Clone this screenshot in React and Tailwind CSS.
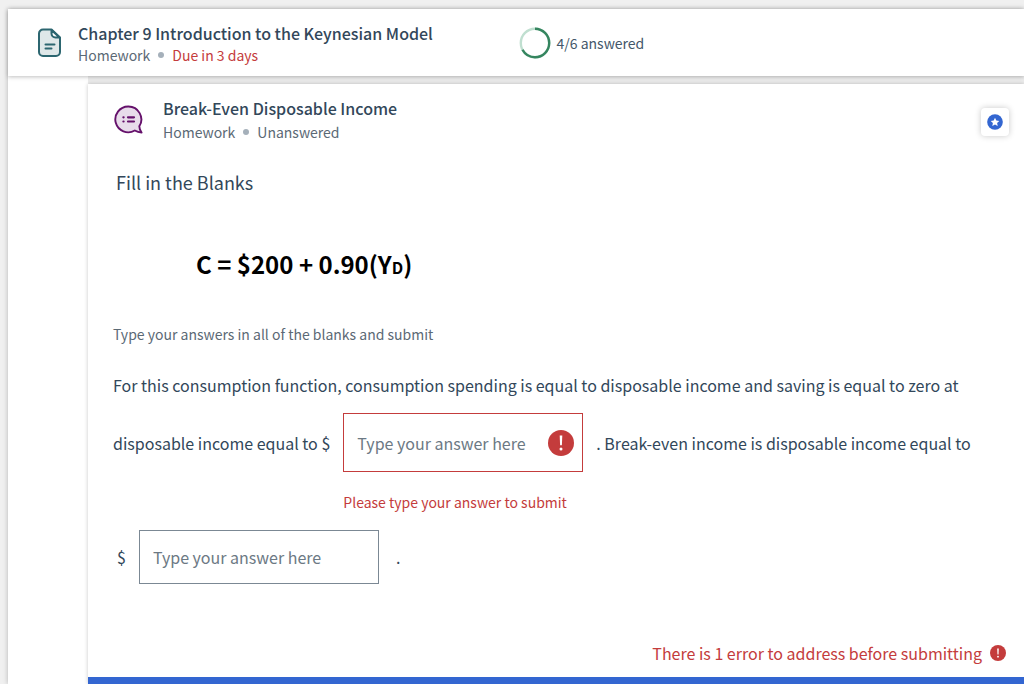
import React from 'react';

const DocumentIcon = () => (
  <svg className="w-[25px] h-[30px] shrink-0" viewBox="0 0 25 30" fill="none" stroke="#2c6670" strokeWidth="2" strokeLinecap="round" strokeLinejoin="round" aria-hidden="true">
    <path d="M6 1.500h8.500L23 9.500V24a4 4 0 0 1-4 4H6a4 4 0 0 1-4-4V5.500a4 4 0 0 1 4-4z" fill="#dfe8e9" />
    <path d="M14.500 2v3.500a4 4 0 0 0 4 4H22.500z" fill="#ffffff" />
    <path d="M8.500 16.500h9M8.500 20.500h6" />
  </svg>
);

const QuestionIcon = () => (
  <svg className="w-[30px] h-[30px] shrink-0" viewBox="0 0 30 30" fill="none" aria-hidden="true">
    <path d="M14.200 1.500a12.900 12.900 0 1 0 6.600 24c2 1.200 4.300 1.900 6.800 2-1.500-1.800-2.200-3.600-2.300-6.200A12.900 12.900 0 0 0 14.200 1.500z" fill="#e8dcea" stroke="#65116b" strokeWidth="1.900" strokeLinejoin="round" />
    <path d="M9.400 12.300h.2M9.400 16.500h.2M14 12.300h6M14 16.500h6" stroke="#65116b" strokeWidth="2.200" strokeLinecap="round" />
  </svg>
);

const ProgressRing = ({ done, total }) => {
  const r = 14.2;
  const length = 2 * Math.PI * r;
  return (
    <svg className="w-8 h-8 shrink-0" viewBox="0 0 32 32" fill="none" strokeWidth="2.400" aria-hidden="true">
      <circle cx="16" cy="16" r={r} stroke="#c0dfd0" />
      <circle
        cx="16"
        cy="16"
        r={r}
        stroke="#35855f"
        strokeDasharray={`${(length * done) / total} ${length}`}
        transform="rotate(-90 16 16)"
      />
    </svg>
  );
};

const ErrorIcon = ({ className }) => (
  <svg className={className} viewBox="0 0 26 26" aria-hidden="true">
    <circle cx="13" cy="13" r="13" fill="#c43c3c" />
    <path d="M11.700 5.500h2.600l-.4 9.800h-1.800z" fill="#ffffff" />
    <circle cx="13" cy="19" r="1.500" fill="#ffffff" />
  </svg>
);

const StarIcon = () => (
  <svg className="w-4 h-4" viewBox="0 0 16 16" aria-hidden="true">
    <circle cx="8" cy="8" r="7.800" fill="#3366d1" />
    <path d="M8 3.700l1.300 2.800 3 .4-2.200 2.100.6 3.100L8 10.600l-2.700 1.500.6-3.100-2.200-2.100 3-.4z" fill="#ffffff" />
  </svg>
);

const Dot = () => <span className="w-[6px] h-[6px] rounded-full bg-[#a5b0ba]" />;

const Blank = ({ id, label, error }) => (
  <span className="inline-flex flex-col mx-[13px] mt-3 mb-[6px]">
    <span
      className={
        error
          ? 'flex items-center w-60 h-[59px] border border-[#c43c3c] pl-[13px] pr-2'
          : 'flex items-center w-60 h-[54px] border border-[#7b8894] px-[13px]'
      }
    >
      <input
        id={id}
        type="text"
        aria-label={label}
        aria-invalid={Boolean(error)}
        aria-describedby={error ? `${id}-error` : undefined}
        placeholder="Type your answer here"
        className="w-full min-w-0 leading-6 outline-none placeholder:text-[#6c7984]"
      />
      {error && <ErrorIcon className="w-[26px] h-[26px] shrink-0" />}
    </span>
    {error && (
      <span id={`${id}-error`} className="mt-5 text-sm leading-5 text-[#c43c3c]">
        {error}
      </span>
    )}
  </span>
);

const Header = () => (
  <header className="relative z-10 flex items-center h-[67px] pl-[29px] bg-white shadow-[0_1px_4px_rgba(0,0,0,0.25)]">
    <div className="flex items-center gap-4 w-1/2 -mr-3">
      <DocumentIcon />
      <div>
        <h1 className="text-base leading-6 font-medium text-[#32475a]">
          Chapter 9 Introduction to the Keynesian Model
        </h1>
        <p className="flex items-center gap-2 text-sm leading-5 text-[#5b6975]">
          Homework <Dot /> <span className="text-[#c43c3c]">Due in 3 days</span>
        </p>
      </div>
    </div>
    <div className="flex items-center gap-[6px] text-sm text-[#44576a]">
      <ProgressRing done={4} total={6} />
      4/6 answered
    </div>
  </header>
);

export default function App() {
  return (
    <div className="flex flex-col min-h-screen pt-[9px] pl-2 bg-[#f0f0f0] font-['Noto_Sans_CJK_SC',sans-serif] text-base text-[#32475a]">
      <div className="flex flex-col grow bg-white shadow-[0_0_5px_rgba(0,0,0,0.25)]">
        <Header />
        <div className="flex grow">
          <div className="w-20 shrink-0" />
          <div className="flex grow pt-2 bg-[#ececec]">
            <main className="flex flex-col grow bg-white shadow-[0_0_4px_rgba(0,0,0,0.22)]">
              <div className="flex items-center pt-3 pl-[26px] pr-[15px]">
                <QuestionIcon />
                <div className="ml-[19px] grow">
                  <h2 className="text-base leading-6 font-medium">Break-Even Disposable Income</h2>
                  <p className="flex items-center gap-2 text-sm leading-6 text-[#5b6975]">
                    Homework <Dot /> Unanswered
                  </p>
                </div>
                <button type="button" aria-label="Bookmark" className="flex items-center justify-center w-7 h-7 mt-1 rounded-sm bg-white shadow-[0_0_6px_rgba(0,0,0,0.22)]">
                  <StarIcon />
                </button>
              </div>

              <h3 className="mt-6 pl-7 text-lg leading-7">Fill in the Blanks</h3>

              <p className="mt-[50px] pl-[108px] text-2xl leading-9 font-bold text-black">
                C = $200 + 0.90(Y<span className="text-base">D</span>)
              </p>

              <div className="pl-[25px] pr-10">
                <p className="mt-10 text-sm leading-6 text-[#5b6975]">
                  Type your answers in all of the blanks and submit
                </p>
                <div className="mt-[23px] leading-8">
                  <span>
                    For this consumption function, consumption spending is equal to disposable income
                    and saving is equal to zero at
                  </span>{' '}
                  <span>disposable income equal to</span>{' '}
                  <span className="whitespace-nowrap">
                    <span>$</span>
                    <Blank id="break-even" label="Disposable income" error="Please type your answer to submit" />
                  </span>
                  <span>. Break-even income is disposable income equal to</span>{' '}
                  <span className="whitespace-nowrap">
                    <span className="pl-1">$</span>
                    <Blank id="equal-to" label="Break-even income" />
                    <span className="pl-1">.</span>
                  </span>
                </div>
              </div>

              <p className="flex items-center justify-end gap-2 mt-auto pb-3 pr-[18px] leading-6 text-[#c43c3c]">
                There is 1 error to address before submitting
                <ErrorIcon className="w-4 h-4" />
              </p>
              <div className="h-[7px] bg-[#3366d1]" />
            </main>
          </div>
        </div>
      </div>
    </div>
  );
}
